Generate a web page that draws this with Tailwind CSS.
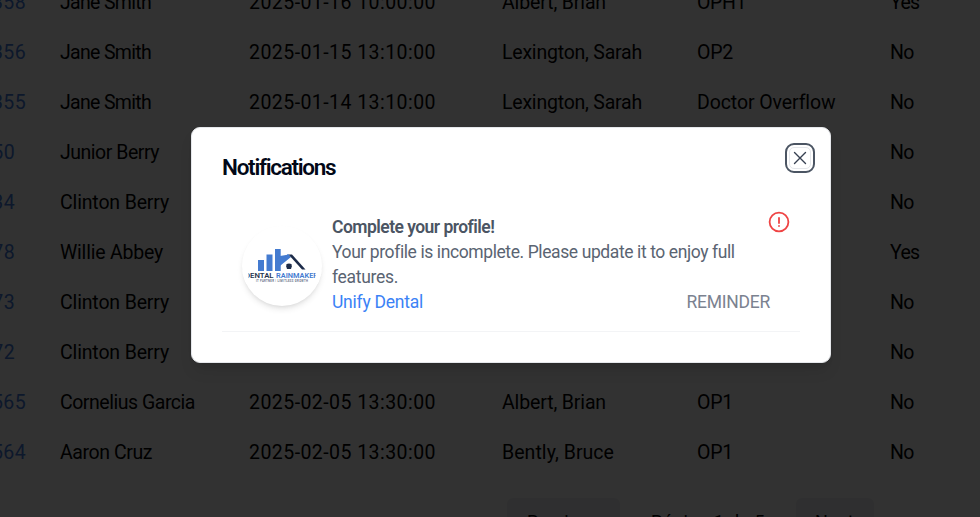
<!DOCTYPE html>
<html lang="en">
<head>
<meta charset="utf-8">
<title>Appointments</title>
<script src="https://cdn.jsdelivr.net/npm/@tailwindcss/browser@4"></script>
</head>
<body class="h-[517px] w-[980px] overflow-hidden bg-[#f9fafb] font-['Roboto',sans-serif] text-black">
<main class="-mt-[22px] flex h-[539px] flex-col overflow-hidden text-[19.5px] font-normal">
  <div id="rows"></div>
  <nav class="mt-[20px] ml-[507px] flex h-10 items-center text-[18px] leading-[50px]">
    <span class="flex h-10 w-[113px] items-center rounded-md bg-[#e9ebee] pt-2 pl-5"><span data-w="73">Previous</span></span>
    <span class="w-[176px] pt-2 pl-[31px]"><span data-w="114">Página 1 de 5</span></span>
    <span class="flex h-10 w-[78px] items-center rounded-md bg-[#e9ebee] pt-2 pl-[19px]"><span data-w="39">Next</span></span>
  </nav>
</main>

<div class="absolute inset-0 bg-black/80 pt-[127px] pl-[191px]">
  <section class="relative h-[236px] w-[640px] rounded-[9px] border border-gray-200 bg-white pt-[24px] pr-[30px] pl-[30px] shadow-lg">
    <h2 class="h-[30px] text-[22.5px] leading-[30px] font-semibold text-[#020817]"><span data-w="113">Notifications</span></h2>
    <button aria-label="Close" class="absolute top-[15px] right-[15px] flex size-[30px] items-center justify-center rounded-[9px] border-[2.5px] border-[#4b5563] bg-white">
      <span class="flex size-[22px] items-center justify-center rounded-[5px] border border-gray-200">
        <svg class="size-[14px] shrink-0" viewBox="0 0 14 14" fill="none" stroke="#374151" stroke-width="1.4" stroke-linecap="round"><path d="M1.5 1.5 12.5 12.5M12.5 1.5 1.5 12.5"/></svg>
      </span>
    </button>
    <article class="mt-[21px] flex h-[129px] border-b border-gray-100 pl-5">
      <div class="mt-[23px] size-20 shrink-0 overflow-hidden rounded-full bg-white shadow-md">
        <svg class="size-20" viewBox="0 0 80 80">
          <g fill="#447bd0">
            <path d="M16 34h6v11h-6zM24.500 28.500h6v16.500h-6zM33 23h5.700v22h-5.700z"/>
            <path d="M38 30 47 28.500 38 40z"/>
          </g>
          <path d="M38.700 45V38L48 30.500 59.500 39.500V45Z" fill="#fff"/>
          <path d="M33 45V38L46 28 49 31 38.500 39.500V45Z" fill="#447bd0"/>
          <path d="M46.500 28.500 50 28.500 63.500 43.500 60 43.500Z" fill="#1c2b49"/>
          <path d="M44.500 38q2.500-1 5 0l.3 2.500-.8 2.500h-4l-.8-2.500z" fill="#1c2b49"/>
          <g font-family="Roboto,sans-serif" font-weight="600" font-size="7.200">
            <text x="3" y="51.500" textLength="28.500" lengthAdjust="spacingAndGlyphs" fill="#26344f">DENTAL</text>
            <text x="34" y="51.500" textLength="42" lengthAdjust="spacingAndGlyphs" fill="#447bd0">RAINMAKER</text>
            <text x="14" y="55.500" textLength="52" font-size="2.700" fill="#59667e">IT PARTNER | LIMITLESS GROWTH</text>
          </g>
          <path d="M0 44h6.500v14H0zM73.500 44H80v14h-6.500z" fill="#fff"/>
        </svg>
      </div>
      <div class="mt-[12px] ml-[10px] w-[438px] text-[17.5px] leading-[25px] text-[#5a6472]">
        <h3 class="font-semibold text-[#4b5563]"><span data-w="162">Complete your profile!</span></h3>
        <p><span data-w="402">Your profile is incomplete. Please update it to enjoy full</span><br><span data-w="66">features.</span></p>
        <div class="flex justify-between"><a class="text-[#3b82f6]"><span data-w="91">Unify Dental</span></a><span class="text-[#7b8290]" data-w="83.500">REMINDER</span></div>
      </div>
      <svg class="mt-[8px] -ml-[2px] size-[22px] shrink-0" viewBox="0 0 22 22" fill="none" stroke="#ef4444" stroke-width="1.800" stroke-linecap="round"><circle cx="11" cy="11" r="9.400"/><path d="M11 7v5M11 15v.1"/></svg>
    </article>
  </section>
</div>
<script>
const rows = [
  ["358", "Jane Smith", "2025-01-16 10:00:00", "Albert, Brian", "OPH1", "Yes"],
  ["356", "Jane Smith", "2025-01-15 13:10:00", "Lexington, Sarah", "OP2", "No"],
  ["355", "Jane Smith", "2025-01-14 13:10:00", "Lexington, Sarah", "Doctor Overflow", "No"],
  ["350", "Junior Berry", "", "", "", "No"],
  ["334", "Clinton Berry", "", "", "", "No"],
  ["378", "Willie Abbey", "", "", "", "Yes"],
  ["373", "Clinton Berry", "", "", "", "No"],
  ["372", "Clinton Berry", "", "", "", "No"],
  ["565", "Cornelius Garcia", "2025-02-05 13:30:00", "Albert, Brian", "OP1", "No"],
  ["564", "Aaron Cruz", "2025-02-05 13:30:00", "Bently, Bruce", "OP1", "No"]
];
const widths = {"Jane Smith":91,"Junior Berry":99,"Clinton Berry":109,"Willie Abbey":103,"Cornelius Garcia":135,"Aaron Cruz":92,"Albert, Brian":104,"Lexington, Sarah":140,"Bently, Bruce":112,"OPH1":49,"OP2":36,"OP1":36,"Doctor Overflow":138,"Yes":29.5,"No":23.5};
const cell = (t, w) => `<span><span data-w="${w}">${t}</span></span>`;
document.getElementById("rows").innerHTML = rows.map((r, i) => {
  const idClass = i >= 3 && i <= 7 ? "text-[#4378d8] -ml-[19px]" : "text-[#4378d8] -ml-[8px]";
  return `<div class="grid h-[50px] grid-cols-[60px_189px_253px_195px_193px_90px] items-center whitespace-nowrap"><span class="${idClass}"><span data-w="34">${r[0]}</span></span>` +
    cell(r[1], widths[r[1]]) + cell(r[2], 187) + cell(r[3], widths[r[3]] || 0) + cell(r[4], widths[r[4]] || 0) + cell(r[5], widths[r[5]]) + `</div>`;
}).join("");
// Tracking for each label, from its natural width and its column text width.
function fit() {
  document.querySelectorAll("[data-w]").forEach(e => {
    if (!e.textContent) return;
    e.style.whiteSpace = "nowrap";
    e.style.letterSpacing = "0px";
    const range = document.createRange();
    range.selectNodeContents(e);
    e.style.letterSpacing = (e.dataset.w - range.getBoundingClientRect().width) / e.textContent.length + "px";
  });
}
fit();
window.addEventListener("load", fit);
document.fonts.ready.then(fit);
</script>
</body>
</html>
